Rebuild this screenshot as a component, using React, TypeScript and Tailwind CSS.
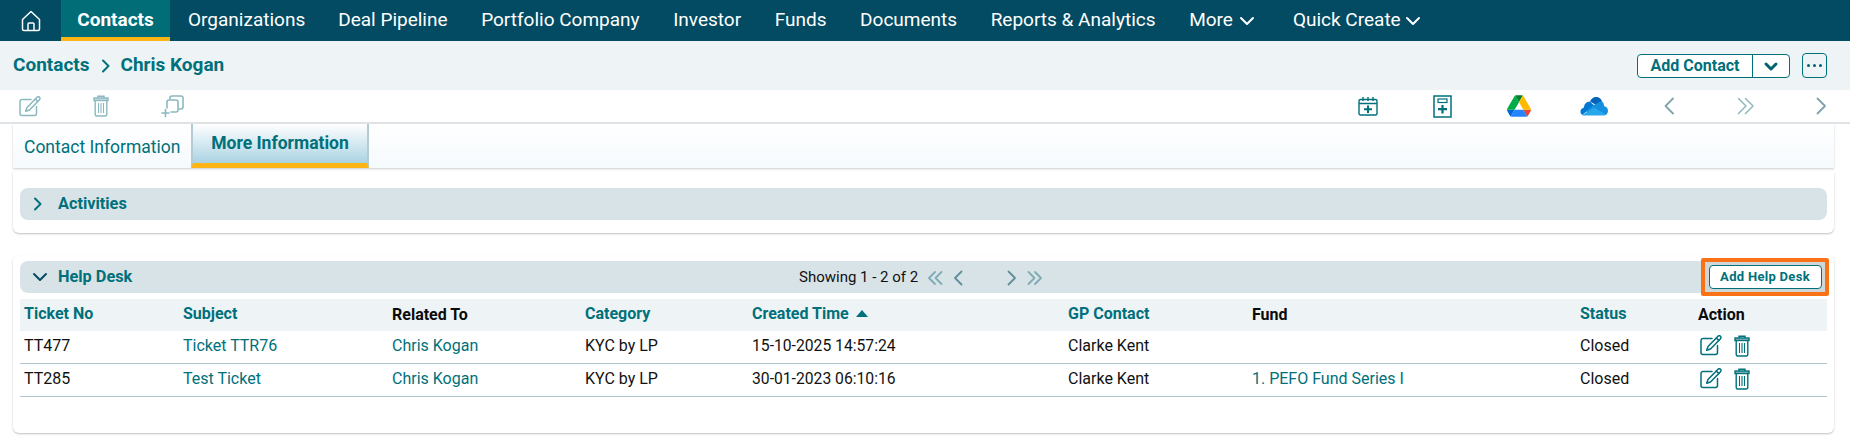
import React from "react";

const teal = "#00707a";
const pale = "#8ab8c0";

function Home() {
  return (
    <svg width="20" height="22" viewBox="0 0 20 22" fill="none" stroke="#fff" strokeWidth="1.5" strokeLinejoin="round">
      <path d="M1.5 9.500 10 1.500l8.500 8v9.500a1.500 1.500 0 0 1-1.500 1.500H3a1.500 1.500 0 0 1-1.500-1.500z" />
      <path d="M7 20.500v-6.500a1 1 0 0 1 1-1h4a1 1 0 0 1 1 1v6.500" />
    </svg>
  );
}
function Edit({ c = teal }: { c?: string }) {
  return (
    <svg width="22" height="21" viewBox="0 0 22 21" fill="none" stroke={c} strokeWidth="1.500" strokeLinejoin="round" strokeLinecap="round">
      <path d="M12 3.500H3a2 2 0 0 0-2 2v12a2 2 0 0 0 2 2h12.500a2 2 0 0 0 2-2V10.500" />
      <path d="M18 1.300a1.700 1.700 0 0 1 2.500 2.400L10.500 14l-3.800 1.300L8 11.500z" />
      <path d="M16.300 3l2.400 2.400" />
    </svg>
  );
}
function Trash({ c = teal }: { c?: string }) {
  return (
    <svg width="16" height="22" viewBox="0 0 16 22" fill="none" stroke={c} strokeWidth="1.400">
      <path d="M5 3V1.200h6V3" />
      <rect x="1" y="3" width="14" height="2.500" fill={c} fillOpacity="0.45" />
      <path d="M2.200 5.500v14a1.500 1.500 0 0 0 1.500 1.500h8.600a1.500 1.500 0 0 0 1.500-1.500v-14" />
      <path d="M5.500 8v10M8 8v10M10.500 8v10" strokeWidth="1.100" />
    </svg>
  );
}
function Duplicate() {
  return (
    <svg width="23" height="22" viewBox="0 0 23 22" fill="none" stroke={pale} strokeWidth="1.600" strokeLinecap="round" strokeLinejoin="round">
      <path d="M9 4V3a2 2 0 0 1 2-2h9a2 2 0 0 1 2 2v9a2 2 0 0 1-2 2h-2" />
      <path d="M6 13V7a2 2 0 0 1 2-2h7a2 2 0 0 1 2 2v8a2 2 0 0 1-2 2h-5" />
      <path d="M1 18h7M4.500 14.500v7" />
    </svg>
  );
}
function CalPlus() {
  return (
    <svg width="20" height="19" viewBox="0 0 20 19" fill="none" stroke={teal} strokeWidth="1.400">
      <rect x="1" y="2.500" width="18" height="15.500" rx="1.500" />
      <path d="M1 6.500h18M5 0v4M10 0v4M15 0v4" />
      <path d="M10 8.500v7.500M6 12.200h8" strokeWidth="2" />
    </svg>
  );
}
function FormPlus() {
  return (
    <svg width="19" height="23" viewBox="0 0 19 23" fill="none" stroke={teal} strokeWidth="1.500">
      <rect x="1" y="1" width="17" height="21" />
      <rect x="5" y="4" width="9" height="3.500" strokeWidth="1.200" />
      <path d="M9.500 10v8.500M5 14.200h9" strokeWidth="2.200" />
    </svg>
  );
}
function Drive() {
  return (
    <svg width="24" height="22" viewBox="0 0 87.300 78">
      <path d="m6.600 66.850 3.850 6.650c.8 1.400 1.950 2.500 3.300 3.300l13.750-23.800h-27.500c0 1.550.4 3.100 1.200 4.500z" fill="#0066da" />
      <path d="m43.650 25-13.750-23.800c-1.350.8-2.500 1.900-3.300 3.300l-25.400 44a9.060 9.060 0 0 0-1.200 4.500h27.500z" fill="#00ac47" />
      <path d="m73.550 76.800c1.350-.8 2.500-1.900 3.300-3.300l1.600-2.750 7.650-13.250c.8-1.400 1.200-2.950 1.200-4.500h-27.502l5.852 11.500z" fill="#ea4335" />
      <path d="m43.650 25 13.750-23.800c-1.350-.8-2.900-1.200-4.500-1.200h-18.500c-1.600 0-3.150.45-4.500 1.200z" fill="#00832d" />
      <path d="m59.800 53h-32.300l-13.750 23.800c1.350.8 2.900 1.200 4.500 1.200h50.800c1.600 0 3.150-.45 4.500-1.200z" fill="#2684fc" />
      <path d="m73.400 26.500-12.700-22c-.8-1.400-1.950-2.500-3.300-3.300l-13.750 23.800 16.150 28h27.450c0-1.550-.4-3.100-1.200-4.500z" fill="#ffba00" />
    </svg>
  );
}
function OneDrive() {
  return (
    <svg width="28" height="20" viewBox="0 0 28 20">
      <path d="M10 5.500C11.500 2 14 .5 17 1c2.500.4 4.300 2 5 4.500l-6 3.500z" fill="#0364b8" />
      <path d="M10 5.500c-4 .2-6 3-6 6-2.300.5-3.800 2.500-3.500 4.500.2 1.300.8 2.300 1.700 2.900L14 9.500z" fill="#0078d4" />
      <path d="M22 5.500c-2.600 0-4.800.9-6 3.500l-2-.5L6 16l19.500 3c1.600-.6 2.500-2.500 2.500-4.300 0-2.500-1.800-4.200-3.800-4.400-.2-2.200-.8-3.900-2.200-4.800z" fill="#1490df" />
      <path d="M3.500 19.500h20c1 0 2-.3 2.500-.7L14 11.500 2.200 18.900c.4.400.8.600 1.300.6z" fill="#28a8ea" />
    </svg>
  );
}
function Chev({ d, c = "#5f8f9a", w = 1.8 }: { d: string; c?: string; w?: number }) {
  return (
    <svg width="18" height="18" viewBox="0 0 18 18" fill="none" stroke={c} strokeWidth={w} strokeLinecap="round" strokeLinejoin="round" className="shrink-0">
      <path d={d} />
    </svg>
  );
}
const LEFT = "M11.500 2.500 5 9l6.500 6.500";
const RIGHT = "M6.500 2.500 13 9l-6.500 6.500";
const DLEFT = "M9 3 3 9l6 6M15.500 3l-6 6 6 6";
const DRIGHT = "M2.500 3l6 6-6 6M9 3l6 6-6 6";
const DOWN = "M3 6l6 6 6-6";
const SMALLRIGHT = "M6 3.500 11.500 9 6 14.500";
const SMALLDOWN = "M4 7l5 5 5-5";
const TLEFT = "M13 1.500 5.500 9l7.500 7.500";
const TRIGHT = "M5.500 1.500 13 9l-7.500 7.500";
const TDRIGHT = "M1.500 1.500 9 9l-7.500 7.500M8.500 1.500 16 9l-7.500 7.500";

const navItems = ["Portfolio Company", "Investor", "Funds", "Documents", "Reports & Analytics"];

const cols = "grid grid-cols-[159px_209px_193px_167px_316px_184px_328px_118px_1fr] items-center";
const cell = "pl-1 truncate";

function Row({ no, subject, date, fund }: { no: string; subject: string; date: string; fund?: string }) {
  return (
    <div className={`${cols} h-[33px] border-b border-[#aec6d2] pb-[3px] text-[16px] text-[#111]`}>
      <div className={cell}>{no}</div>
      <div className={`${cell} text-[#00707a]`}>{subject}</div>
      <div className={`${cell} text-[#00707a]`}>Chris Kogan</div>
      <div className={cell}>KYC by LP</div>
      <div className={`${cell} text-[15.7px]`}>{date}</div>
      <div className={cell}>Clarke Kent</div>
      <div className={`${cell} text-[#00707a]`}>{fund ?? ""}</div>
      <div className={cell}>Closed</div>
      <div className="flex items-center gap-[12px] pl-[6px]">
        <Edit />
        <Trash />
      </div>
    </div>
  );
}

export default function App() {
  return (
    <div className="w-[1850px] h-[440px] overflow-hidden bg-white font-['Roboto',sans-serif]">
      {/* top navigation */}
      <nav className="h-[41px] bg-[#024b62] flex items-center text-white text-[19px] whitespace-nowrap">
        <div className="w-[61px] flex justify-center"><Home /></div>
        <div className="w-[109px] h-full flex items-center justify-center pt-[4px] font-bold bg-[#006d77] border-b-[4px] border-[#fdb515]">Contacts</div>
        <span className="ml-[18px]">Organizations</span>
        <span className="ml-[33px]">Deal Pipeline</span>
        {navItems.map((t) => (
          <span key={t} className="ml-[33.6px]">{t}</span>
        ))}
        <span className="ml-[33.6px] flex items-center gap-[5px]">More <Chev d={DOWN} c="#fff" w={2} /></span>
        <span className="ml-[37px] flex items-center gap-[3px]">Quick Create <Chev d={DOWN} c="#fff" w={2} /></span>
      </nav>

      {/* breadcrumb */}
      <div className="h-[49px] bg-[#eef3f6] flex items-center pl-[13px] pr-[23px] text-[19px] font-bold text-[#00707a]">
        <span>Contacts</span>
        <span className="ml-[7px] mr-[6px] flex"><Chev d={SMALLRIGHT} c="#00707a" w={2} /></span>
        <span>Chris Kogan</span>
        <div className="ml-auto flex items-center">
          <div className="flex h-[24px] items-center border border-[#00707a] rounded-[4px] bg-white text-[16px] font-bold">
            <span className="w-[114px] text-center whitespace-nowrap">Add Contact</span>
            <span className="w-[37px] h-full flex items-center justify-center border-l border-[#00707a]"><Chev d={SMALLDOWN} c="#00636e" w={3} /></span>
          </div>
          <div className="ml-[12px] w-[25px] h-[25px] border border-[#00707a] rounded-[4px] flex items-center justify-center gap-[2.5px]">
            <span className="w-[3.5px] h-[3.5px] rounded-full bg-[#00636e]" />
            <span className="w-[3.5px] h-[3.5px] rounded-full bg-[#00636e]" />
            <span className="w-[3.5px] h-[3.5px] rounded-full bg-[#00636e]" />
          </div>
        </div>
      </div>

      {/* toolbar */}
      <div className="h-[34px] bg-white border-b-2 border-[#e1e4e6] flex items-center">
        <div className="ml-[19px]"><Edit c={pale} /></div>
        <div className="ml-[52px]"><Trash c={pale} /></div>
        <div className="ml-[52px]"><Duplicate /></div>
        <div className="ml-auto flex items-center h-full">
          <CalPlus />
          <div className="ml-[55px]"><FormPlus /></div>
          <div className="ml-[55px]"><Drive /></div>
          <div className="ml-[49px]"><OneDrive /></div>
          <div className="ml-[52px]"><Chev d={TLEFT} c="#7fa3ad" w={1.800} /></div>
          <div className="ml-[59px]"><Chev d={TDRIGHT} c="#8fb8c0" w={1.500} /></div>
          <div className="ml-[57px] mr-[20px]"><Chev d={TRIGHT} c="#7fa3ad" w={1.800} /></div>
        </div>
      </div>

      {/* tabs */}
      <div className="ml-[13px] mr-[16px] h-[44px] flex bg-gradient-to-b from-white to-[#f5fafd] shadow-[0_1px_2px_rgba(0,0,0,0.2)]">
        <div className="w-[178px] pl-[11px] pt-[2px] flex items-center text-[17.5px] text-[#00707a] whitespace-nowrap">Contact Information</div>
        <div className="w-[178px] h-full flex items-center justify-center text-[17.5px] font-bold text-[#00707a] bg-gradient-to-b from-white to-[#a9d3e3] border-x-2 border-[#b5cbd4] border-b-[5px] border-b-[#fdb515] whitespace-nowrap">More Information</div>
      </div>

      {/* activities */}
      <section className="ml-[13px] mr-[16px] mt-[4px] h-[61px] px-[7px] pt-[16px] rounded-b-[6px] bg-white shadow-[0_1px_2px_rgba(0,0,0,0.25)]">
        <div className="h-[32px] rounded-[8px] bg-[#d8e3e8] flex items-center pl-[9px] text-[16.3px] font-bold text-[#00707a]">
          <Chev d={SMALLRIGHT} c="#00707a" w={2} />
          <span className="ml-[11px]">Activities</span>
        </div>
      </section>

      {/* help desk */}
      <section className="relative ml-[13px] mr-[16px] mt-[22px] h-[178px] px-[7px] pt-[6px] rounded-[6px] bg-white shadow-[0_1px_2px_rgba(0,0,0,0.25)]">
        <div className="relative h-[32px] rounded-[8px] bg-[#d8e3e8] flex items-center pl-[11px]">
          <Chev d={DOWN} c="#024b62" w={2} />
          <span className="ml-[9px] pt-[1px] text-[16.3px] font-bold text-[#00707a]">Help Desk</span>
          <div className="absolute left-[779px] top-0 h-full pt-[1px] flex items-center text-[15px] text-[#111]">
            <span>Showing 1 - 2 of 2</span>
            <span className="ml-[8px] flex"><Chev d={DLEFT} c="#7fabb5" /></span>
            <span className="ml-[6px] flex"><Chev d={LEFT} c="#5f8f9a" /></span>
            <span className="ml-[34px] flex"><Chev d={RIGHT} c="#5f8f9a" /></span>
            <span className="ml-[6px] flex"><Chev d={DRIGHT} c="#7fabb5" /></span>
          </div>
        </div>
        <div className="absolute right-[5px] top-[3px] w-[128px] h-[38px] border-[4px] border-[#f97316] bg-[#d0d5d7] rounded-[2px] flex items-center justify-center">
          <span className="w-[113px] h-[24px] rounded-[4px] border border-[#00707a] bg-white flex items-center justify-center text-[13px] font-bold tracking-[0.3px] text-[#00707a] whitespace-nowrap">Add Help Desk</span>
        </div>
        <div className="mt-[6px]">
          <div className={`${cols} h-[32px] pb-[3px] bg-[#eef3f6] text-[16px] font-bold text-[#00707a]`}>
            <div className={cell}>Ticket No</div>
            <div className={cell}>Subject</div>
            <div className={`${cell} text-[#0b0b0b] pt-[2px]`}>Related To</div>
            <div className={cell}>Category</div>
            <div className={`${cell} flex items-center gap-[7px]`}>
              Created Time
              <span className="w-0 h-0 border-x-[6px] border-x-transparent border-b-[7px] border-b-[#00707a]" />
            </div>
            <div className={cell}>GP Contact</div>
            <div className={`${cell} text-[#0b0b0b] pt-[2px]`}>Fund</div>
            <div className={cell}>Status</div>
            <div className={`${cell} text-[#0b0b0b] pt-[2px]`}>Action</div>
          </div>
          <Row no="TT477" subject="Ticket TTR76" date="15-10-2025 14:57:24" />
          <Row no="TT285" subject="Test Ticket" date="30-01-2023 06:10:16" fund="1. PEFO Fund Series I" />
        </div>
      </section>
    </div>
  );
}
